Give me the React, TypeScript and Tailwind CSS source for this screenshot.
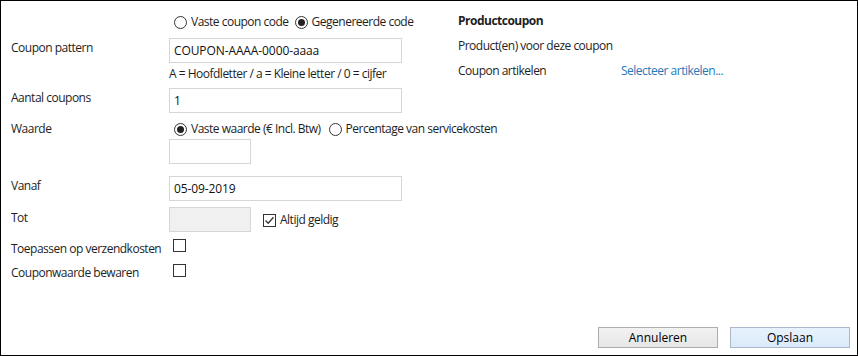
import React from "react";

const font = { fontFamily: '"Open Sans", "Noto Sans", sans-serif' };

function Radio({ checked }: { checked?: boolean }) {
  return (
    <span className="inline-flex h-[13px] w-[13px] shrink-0 items-center justify-center rounded-full border border-[#333] bg-white">
      {checked && <span className="h-[7px] w-[7px] rounded-full bg-[#222]" />}
    </span>
  );
}

function Checkbox({ checked }: { checked?: boolean }) {
  return (
    <span className="inline-flex h-[13px] w-[13px] shrink-0 items-center justify-center border border-[#333] bg-white">
      {checked && (
        <svg width="11" height="11" viewBox="0 0 11 11">
          <path d="M1.5 5.5 L4.2 8.2 L9.5 2.2" fill="none" stroke="#333" strokeWidth="1.3" />
        </svg>
      )}
    </span>
  );
}

function Input({ value, w = "w-[233px]", disabled }: { value?: string; w?: string; disabled?: boolean }) {
  return (
    <div
      className={`${w} h-[25px] shrink-0 border border-[#d6d6d6] ${disabled ? "bg-[#f0f0f0]" : "bg-white"} flex items-center pl-[4px] text-[12px] tracking-[-0.1px] text-[#111]`}
    >
      {value}
    </div>
  );
}

export default function App() {
  return (
    <div
      className="flex h-[356px] w-[858px] flex-col whitespace-nowrap border border-black bg-white text-[12px] leading-[16px] text-[#1e1e1e]"
      style={font}
    >
      <div className="flex flex-1 tracking-[-0.5px]">
        {/* Left column */}
        <div className="flex w-[457px] shrink-0 flex-col pl-[10px] pt-[10px]">
          {/* radio row */}
          <div className="flex h-[22px] items-center">
            <div className="w-[158px] shrink-0" />
            <div className="flex items-center pl-[5px]">
              <Radio />
              <span className="ml-[4px]">Vaste coupon code</span>
              <span className="ml-[6px] flex items-center">
                <Radio checked />
                <span className="ml-[4px]">Gegenereerde code</span>
              </span>
            </div>
          </div>

          {/* coupon pattern */}
          <div className="mt-[5px] flex items-start">
            <div className="w-[158px] shrink-0 pt-[2px]">Coupon pattern</div>
            <Input value="COUPON-AAAA-0000-aaaa" />
          </div>

          {/* hint */}
          <div className="flex h-[22px] items-center">
            <div className="w-[158px] shrink-0" />
            <div>A = Hoofdletter / a = Kleine letter / 0 = cijfer</div>
          </div>

          {/* aantal */}
          <div className="mt-[3px] flex items-start">
            <div className="w-[158px] shrink-0 pt-[2px]">Aantal coupons</div>
            <Input value="1" />
          </div>

          {/* waarde */}
          <div className="mt-[6px] flex h-[20px] items-center">
            <div className="w-[158px] shrink-0">Waarde</div>
            <div className="flex items-center pl-[5px]">
              <Radio checked />
              <span className="ml-[4px]">Vaste waarde (€ Incl. Btw)</span>
              <span className="ml-[8px] flex items-center">
                <Radio />
                <span className="ml-[4px]">Percentage van servicekosten</span>
              </span>
            </div>
          </div>
          <div className="flex">
            <div className="w-[158px] shrink-0" />
            <Input w="w-[82px]" />
          </div>

          {/* vanaf */}
          <div className="mt-[12px] flex items-start">
            <div className="w-[158px] shrink-0 pt-[2px]">Vanaf</div>
            <Input value="05-09-2019" />
          </div>

          {/* tot */}
          <div className="mt-[6px] flex items-start">
            <div className="w-[158px] shrink-0 pt-[3px]">Tot</div>
            <Input w="w-[82px]" disabled />
            <div className="ml-[12px] flex h-[25px] items-center pt-[1px]">
              <Checkbox checked />
              <span className="ml-[4px]">Altijd geldig</span>
            </div>
          </div>

          {/* toepassen */}
          <div className="mt-[9px] flex h-[13px] items-center">
            <div className="w-[158px] shrink-0 pt-[2px]">Toepassen op verzendkosten</div>
            <div className="pl-[4px]">
              <Checkbox />
            </div>
          </div>

          {/* couponwaarde */}
          <div className="mt-[12px] flex h-[13px] items-center">
            <div className="w-[158px] shrink-0 pt-[1px]">Couponwaarde bewaren</div>
            <div className="pl-[4px]">
              <Checkbox />
            </div>
          </div>
        </div>

        {/* Right column */}
        <div className="flex flex-col pt-[12px]">
          <div className="h-[16px] font-bold">Productcoupon</div>
          <div className="mt-[9px] h-[16px]">Product(en) voor deze coupon</div>
          <div className="mt-[9px] flex h-[16px]">
            <div className="w-[163px] shrink-0">Coupon artikelen</div>
            <div className="text-[#2678b8]">Selecteer artikelen...</div>
          </div>
        </div>
      </div>

      {/* buttons */}
      <div className="flex justify-end gap-[12px] pb-[7px] pr-[7px]">
        <button className="flex h-[21px] w-[120px] items-center justify-center border border-[#adadad] bg-gradient-to-b from-[#f2f2f2] to-[#e6e6e6] text-[12px] text-black">
          Annuleren
        </button>
        <button className="flex h-[21px] w-[120px] items-center justify-center border border-[#a9b8c8] bg-gradient-to-b from-[#e8f2fc] to-[#dbeafa] text-[12px] text-black">
          Opslaan
        </button>
      </div>
    </div>
  );
}
